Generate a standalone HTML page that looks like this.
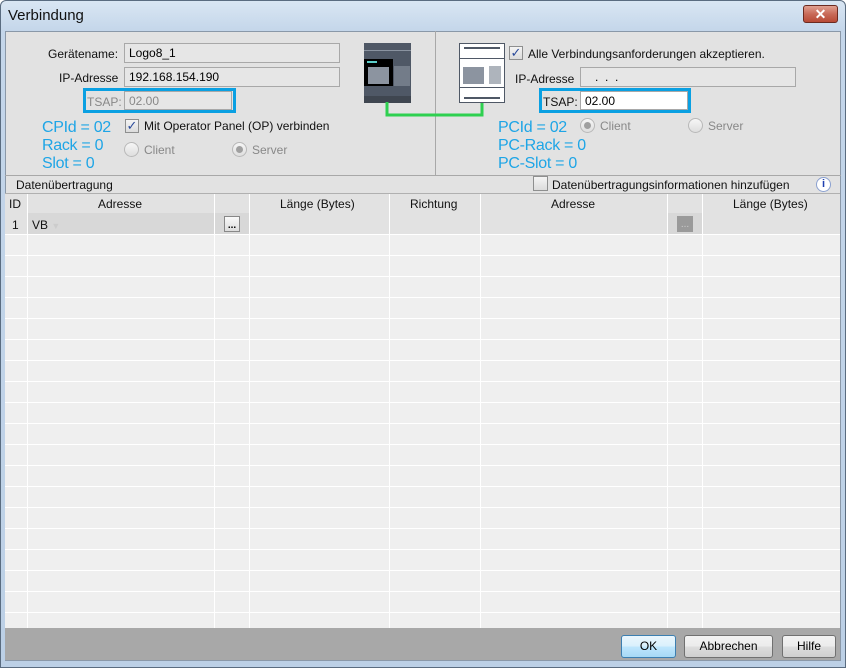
<!DOCTYPE html>
<html><head><style>
*{margin:0;padding:0;box-sizing:border-box}
body{width:846px;height:668px;background:#fff;font-family:"Liberation Sans",sans-serif;font-size:12px;color:#000;position:relative;overflow:hidden}
.a{position:absolute}
.frame{left:0;top:0;width:846px;height:668px;background:linear-gradient(#d9e6f3,#c4d6ea 30px,#bcd0e6);border:1px solid #5a6c80;border-radius:6px 6px 0 0}
.content{left:5px;top:31px;width:836px;height:630px;background:#e2e2e2;border:1px solid #8a98a8}
.lbl{font-size:12px;color:#111}
.fld{background:#e6e6e6;border:1px solid #a8a8a8;height:20px;font-size:12px;padding:2px 4px}
.blue{color:#1ea5e6;font-size:16px;line-height:18px;letter-spacing:-0.3px}
.cb{width:14px;height:14px;border:1px solid #8e8f8f;background:linear-gradient(#f4f4f4,#dcdcdc)}
.rad{width:15px;height:15px;border-radius:50%;border:1px solid #b8b8b8;background:linear-gradient(#f6f6f6,#dedede)}
.gray{color:#888}
.btn{height:23px;border:1px solid #707070;border-radius:3px;background:linear-gradient(#f2f2f2,#ebebeb 50%,#dddddd 51%,#cfcfcf);text-align:center;line-height:21px;font-size:12px}
</style></head><body>
<div class="a frame"></div>
<div class="a" style="left:8px;top:7px;font-size:15px;color:#111">Verbindung</div>
<div class="a" style="left:803px;top:5px;width:35px;height:18px;border:1px solid #6b2a20;border-radius:3px;background:linear-gradient(#e0a090,#c86a58 50%,#b84a36);color:#fff;font-weight:bold;font-size:14px;text-align:center;line-height:16px">✕</div>
<div class="a content"></div>
<div class="a" style="left:435px;top:31px;width:1px;height:144px;background:#a8a8a8"></div>
<div class="a" style="left:5px;top:175px;width:836px;height:1px;background:#a8a8a8"></div>

<div class="a lbl" style="left:48px;top:47px">Gerätename:</div>
<div class="a fld" style="left:124px;top:43px;width:216px">Logo8_1</div>
<div class="a lbl" style="left:59px;top:71px">IP-Adresse</div>
<div class="a fld" style="left:124px;top:67px;width:216px">192.168.154.190</div>
<div class="a" style="left:83px;top:88px;width:153px;height:25px;border:3px solid #0aa0e2"></div>
<div class="a lbl gray" style="left:87px;top:95px">TSAP:</div>
<div class="a fld gray" style="left:124px;top:91px;width:108px;height:19px">02.00</div>
<div class="a blue" style="left:42px;top:119px">CPId = 02</div>
<div class="a blue" style="left:42px;top:137px">Rack = 0</div>
<div class="a blue" style="left:42px;top:155px">Slot = 0</div>
<div class="a cb" style="left:125px;top:119px;color:#2a4a9a;font-size:13px;line-height:12px;text-align:center">✓</div>
<div class="a lbl" style="left:144px;top:119px">Mit Operator Panel (OP) verbinden</div>
<div class="a rad" style="left:124px;top:142px"></div>
<div class="a lbl gray" style="left:144px;top:143px">Client</div>
<div class="a rad" style="left:232px;top:142px"><div style="margin:3px;width:7px;height:7px;border-radius:50%;background:#a0a0a0"></div></div>
<div class="a lbl gray" style="left:252px;top:143px">Server</div>

<!-- devices -->
<svg class="a" style="left:350px;top:30px" width="170" height="100">
<rect x="14" y="13" width="47" height="60" fill="#4f5866"/>
<rect x="14" y="20" width="47" height="1" fill="#8a93a0"/>
<rect x="14" y="29" width="29" height="27" fill="#000"/>
<rect x="18" y="37" width="21" height="17" fill="#8c94a0"/>
<rect x="17" y="31" width="10" height="2" fill="#5ccdc8"/>
<rect x="44" y="36" width="16" height="20" fill="#8c94a0" opacity=".6"/>
<rect x="14" y="66" width="47" height="7" fill="#3f4650"/>
<polyline points="37,72 37,85 132,85 132,72" fill="none" stroke="#2ed050" stroke-width="3"/>
<rect x="109.5" y="13.5" width="45" height="59" fill="#fff" stroke="#4f5866"/>
<rect x="109" y="28" width="46" height="1" fill="#4f5866"/>
<rect x="109" y="57" width="46" height="1" fill="#4f5866"/>
<rect x="113" y="37" width="21" height="17" fill="#8c94a0"/>
<rect x="114" y="17" width="36" height="2" fill="#4f5866"/>
<rect x="114" y="67" width="36" height="2" fill="#4f5866"/>
<rect x="139" y="36" width="12" height="18" fill="#8c94a0" opacity=".7"/>
</svg>

<div class="a cb" style="left:509px;top:46px;color:#2a4a9a;font-size:13px;line-height:12px;text-align:center">✓</div>
<div class="a lbl" style="left:528px;top:47px">Alle Verbindungsanforderungen akzeptieren.</div>
<div class="a lbl" style="left:515px;top:72px">IP-Adresse</div>
<div class="a fld" style="left:580px;top:67px;width:216px">&nbsp;&nbsp;&nbsp;.&nbsp;&nbsp;.&nbsp;&nbsp;.</div>
<div class="a" style="left:539px;top:88px;width:152px;height:25px;border:3px solid #0aa0e2"></div>
<div class="a lbl" style="left:543px;top:95px">TSAP:</div>
<div class="a fld" style="left:580px;top:91px;width:108px;height:19px;background:#fff">02.00</div>
<div class="a blue" style="left:498px;top:119px">PCId = 02</div>
<div class="a blue" style="left:498px;top:137px">PC-Rack = 0</div>
<div class="a blue" style="left:498px;top:155px">PC-Slot = 0</div>
<div class="a rad" style="left:580px;top:118px"><div style="margin:3px;width:7px;height:7px;border-radius:50%;background:#a0a0a0"></div></div>
<div class="a lbl gray" style="left:600px;top:119px">Client</div>
<div class="a rad" style="left:688px;top:118px"></div>
<div class="a lbl gray" style="left:708px;top:119px">Server</div>

<div class="a lbl" style="left:16px;top:178px">Datenübertragung</div>
<div class="a cb" style="left:533px;top:176px;width:15px;height:15px"></div>
<div class="a lbl" style="left:552px;top:178px">Datenübertragungsinformationen hinzufügen</div>
<div class="a" style="left:816px;top:177px;width:15px;height:15px;border-radius:50%;border:1px solid #8aa0d0;background:#fff;color:#2040b0;font-weight:bold;font-size:11px;text-align:center;line-height:13px">i</div>

<!-- table -->
<div class="a" style="left:5px;top:193px;width:835px;height:1px;background:#b0b0b0"></div>
<div class="a" style="left:5px;top:194px;width:835px;height:40px;background:#e2e2e2"></div>
<div class="a" style="left:5px;top:234px;width:835px;height:394px;background:#efefef;
background-image:repeating-linear-gradient(to bottom,#ffffff 0,#ffffff 1px,transparent 1px,transparent 21px)"></div>
<svg class="a" style="left:0;top:194px" width="846" height="434">
<g stroke="#fff" stroke-width="1">
<line x1="27.5" y1="0" x2="27.5" y2="434"/><line x1="214.5" y1="0" x2="214.5" y2="434"/>
<line x1="249.5" y1="0" x2="249.5" y2="434"/><line x1="389.5" y1="0" x2="389.5" y2="434"/>
<line x1="480.5" y1="0" x2="480.5" y2="434"/><line x1="667.5" y1="0" x2="667.5" y2="434"/>
<line x1="702.5" y1="0" x2="702.5" y2="434"/>
</g></svg>
<div class="a" style="left:28px;top:213px;width:186px;height:21px;background:#d8d8d8"></div>
<div class="a" style="left:215px;top:213px;width:34px;height:21px;background:#d8d8d8"></div>
<div class="a" style="left:668px;top:213px;width:34px;height:21px;background:#d8d8d8"></div>
<div class="a lbl" style="left:9px;top:197px">ID</div>
<div class="a lbl" style="left:98px;top:197px">Adresse</div>
<div class="a lbl" style="left:280px;top:197px">Länge (Bytes)</div>
<div class="a lbl" style="left:410px;top:197px">Richtung</div>
<div class="a lbl" style="left:551px;top:197px">Adresse</div>
<div class="a lbl" style="left:733px;top:197px">Länge (Bytes)</div>
<div class="a lbl" style="left:12px;top:218px">1</div>
<div class="a lbl" style="left:32px;top:218px">VB <span style="color:#ccc;font-size:9px">▼</span></div>
<div class="a" style="left:224px;top:216px;width:16px;height:16px;border:1px solid #888;background:linear-gradient(#fafafa,#dcdcdc);font-size:10px;line-height:18px;text-align:center;font-weight:bold">...</div>
<div class="a" style="left:677px;top:216px;width:16px;height:16px;background:#9a9a9a;color:#ccc;font-size:10px;line-height:18px;text-align:center">...</div>

<div class="a" style="left:5px;top:628px;width:835px;height:32px;background:#a8a8a8"></div>
<div class="a btn" style="left:621px;top:635px;width:55px;border-color:#3c7fb1;background:linear-gradient(#eaf6fd,#d9f0fc 50%,#bee6fd 51%,#a7d9f5)">OK</div>
<div class="a btn" style="left:684px;top:635px;width:89px">Abbrechen</div>
<div class="a btn" style="left:782px;top:635px;width:54px">Hilfe</div>
</body></html>
